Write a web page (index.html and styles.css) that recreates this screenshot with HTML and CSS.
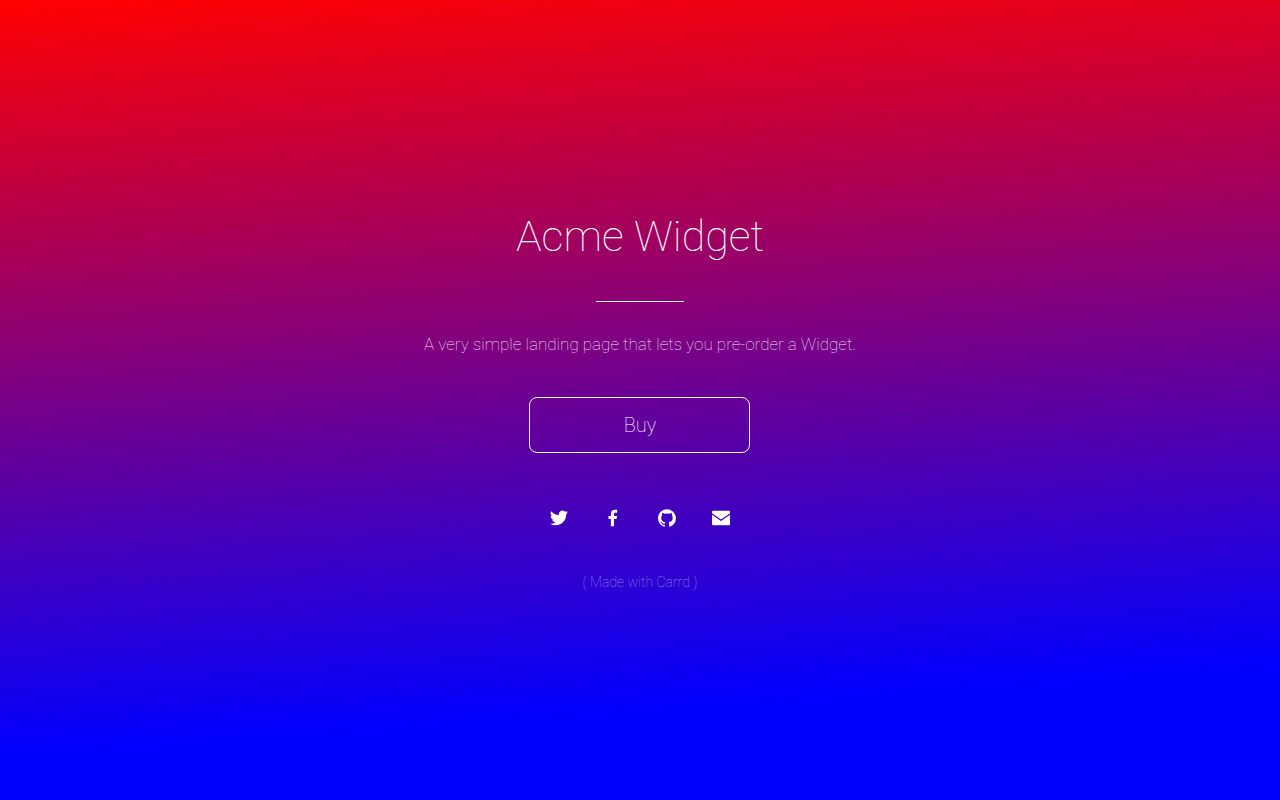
FILE: index.html
```
<!DOCTYPE html>
<html lang="en">
<head>
  <meta charset="UTF-8">
  <meta name="viewport" content="width=device-width, initial-scale=1">
  <title>Acme Widget</title>
  <link rel="stylesheet" href="styles.css">
</head>
<body>
  <main class="main">
    <h1 class="title">Acme Widget</h1>
    <hr class="divider">
    <p class="intro">A very simple landing page that lets you pre-order a Widget.</p>
    <button class="buy-btn" type="button">Buy</button>

    <ul class="icons">
      <li>
        <a href="#twitter" aria-label="Twitter">
          <svg viewBox="0 0 24 24"><path d="M23.95 4.57a10 10 0 0 1-2.82.77 4.96 4.96 0 0 0 2.16-2.72c-.95.55-2 .96-3.13 1.18a4.92 4.92 0 0 0-8.38 4.48C7.69 8.1 4.07 6.13 1.64 3.16a4.9 4.9 0 0 0 1.52 6.57 4.9 4.9 0 0 1-2.23-.61v.06a4.92 4.92 0 0 0 3.95 4.83 5 5 0 0 1-2.21.08 4.94 4.94 0 0 0 4.6 3.42A9.87 9.87 0 0 1 0 19.54a14 14 0 0 0 7.55 2.21c9.05 0 14-7.5 14-13.98 0-.21 0-.42-.02-.63a9.94 9.94 0 0 0 2.42-2.57z"/></svg>
        </a>
      </li>
      <li>
        <a href="#facebook" aria-label="Facebook">
          <svg viewBox="0 0 24 24"><path d="M9.2 23V13.2H6V9.2h3.2V6.3C9.2 3 11.2 1 14.4 1c1.5 0 2.8.1 3.2.2v3.7h-2.2c-1.7 0-2.1.9-2.1 2.1v2.2h4.1l-.6 4h-3.5V23z"/></svg>
        </a>
      </li>
      <li>
        <a href="#github" aria-label="GitHub">
          <svg viewBox="0 0 24 24"><path d="M12 .3a12 12 0 0 0-3.8 23.38c.6.12.83-.26.83-.57L9 21.07c-3.34.72-4.04-1.61-4.04-1.61-.55-1.39-1.34-1.76-1.34-1.76-1.08-.74.09-.73.09-.73 1.2.09 1.83 1.24 1.83 1.24 1.08 1.83 2.81 1.3 3.5 1 .1-.78.42-1.31.76-1.61-2.67-.3-5.47-1.33-5.47-5.93 0-1.31.47-2.38 1.24-3.22-.14-.3-.54-1.52.1-3.18 0 0 1-.32 3.3 1.23a11.5 11.5 0 0 1 6 0c2.28-1.55 3.29-1.23 3.29-1.23.64 1.66.24 2.88.12 3.18a4.65 4.65 0 0 1 1.23 3.22c0 4.61-2.8 5.63-5.48 5.92.42.36.81 1.1.81 2.22l-.01 3.29c0 .31.2.69.82.57A12 12 0 0 0 12 .3"/></svg>
        </a>
      </li>
      <li>
        <a href="#email" aria-label="Email">
          <svg viewBox="0 0 24 24"><path d="M1.5 2.200h21q1.500 0 1.500 1.500v2l-12 8.300-12-8.300v-2q0-1.500 1.500-1.500zM0 7.800l12 8.200 12-8.200v12.500q0 1.500-1.500 1.500h-21Q0 21.800 0 20.300z"/></svg>
        </a>
      </li>
    </ul>

    <a class="credit" href="https://carrd.co">( Made with Carrd )</a>
  </main>
</body>
</html>
```
FILE: styles.css
```
html, body {
  margin: 0;
  padding: 0;
}

body {
  min-height: 100vh;
  display: flex;
  justify-content: center;
  align-items: center;
  font-family: Roboto, sans-serif;
  font-weight: 100;
  color: white;
  background: linear-gradient(176deg, #ff0000 0%, #0000ff 85%) fixed;
}

.main {
  display: flex;
  flex-direction: column;
  align-items: center;
  padding: 26px 24px 24px;
  text-align: center;
}

.title {
  margin: 0;
  font-size: 43px;
  line-height: 54px;
  font-weight: 100;
}

.divider {
  width: 88px;
  height: 1px;
  margin: 38px 0 30px;
  border: none;
  background-color: white;
}

.intro {
  margin: 0;
  font-size: 17px;
  line-height: 24px;
  color: rgba(255, 255, 255, 0.9);
}

.buy-btn {
  width: 221px;
  height: 56px;
  margin: 41px 0 53px;
  border: 1px solid white;
  border-radius: 8px;
  background: none;
  color: white;
  font-family: inherit;
  font-size: 20px;
  font-weight: 100;
  cursor: pointer;
}

.buy-btn:hover {
  background-color: rgba(255, 255, 255, 0.1);
}

.icons {
  display: flex;
  gap: 30px;
  margin: 0;
  padding: 0;
  list-style: none;
}

.icons a {
  display: flex;
  justify-content: center;
  align-items: center;
  width: 24px;
  height: 24px;
}

.icons svg {
  width: 18px;
  height: 18px;
  fill: white;
}

.credit {
  margin-top: 40px;
  font-size: 14px;
  line-height: 24px;
  color: rgba(255, 255, 255, 0.5);
  text-decoration: none;
}
```
